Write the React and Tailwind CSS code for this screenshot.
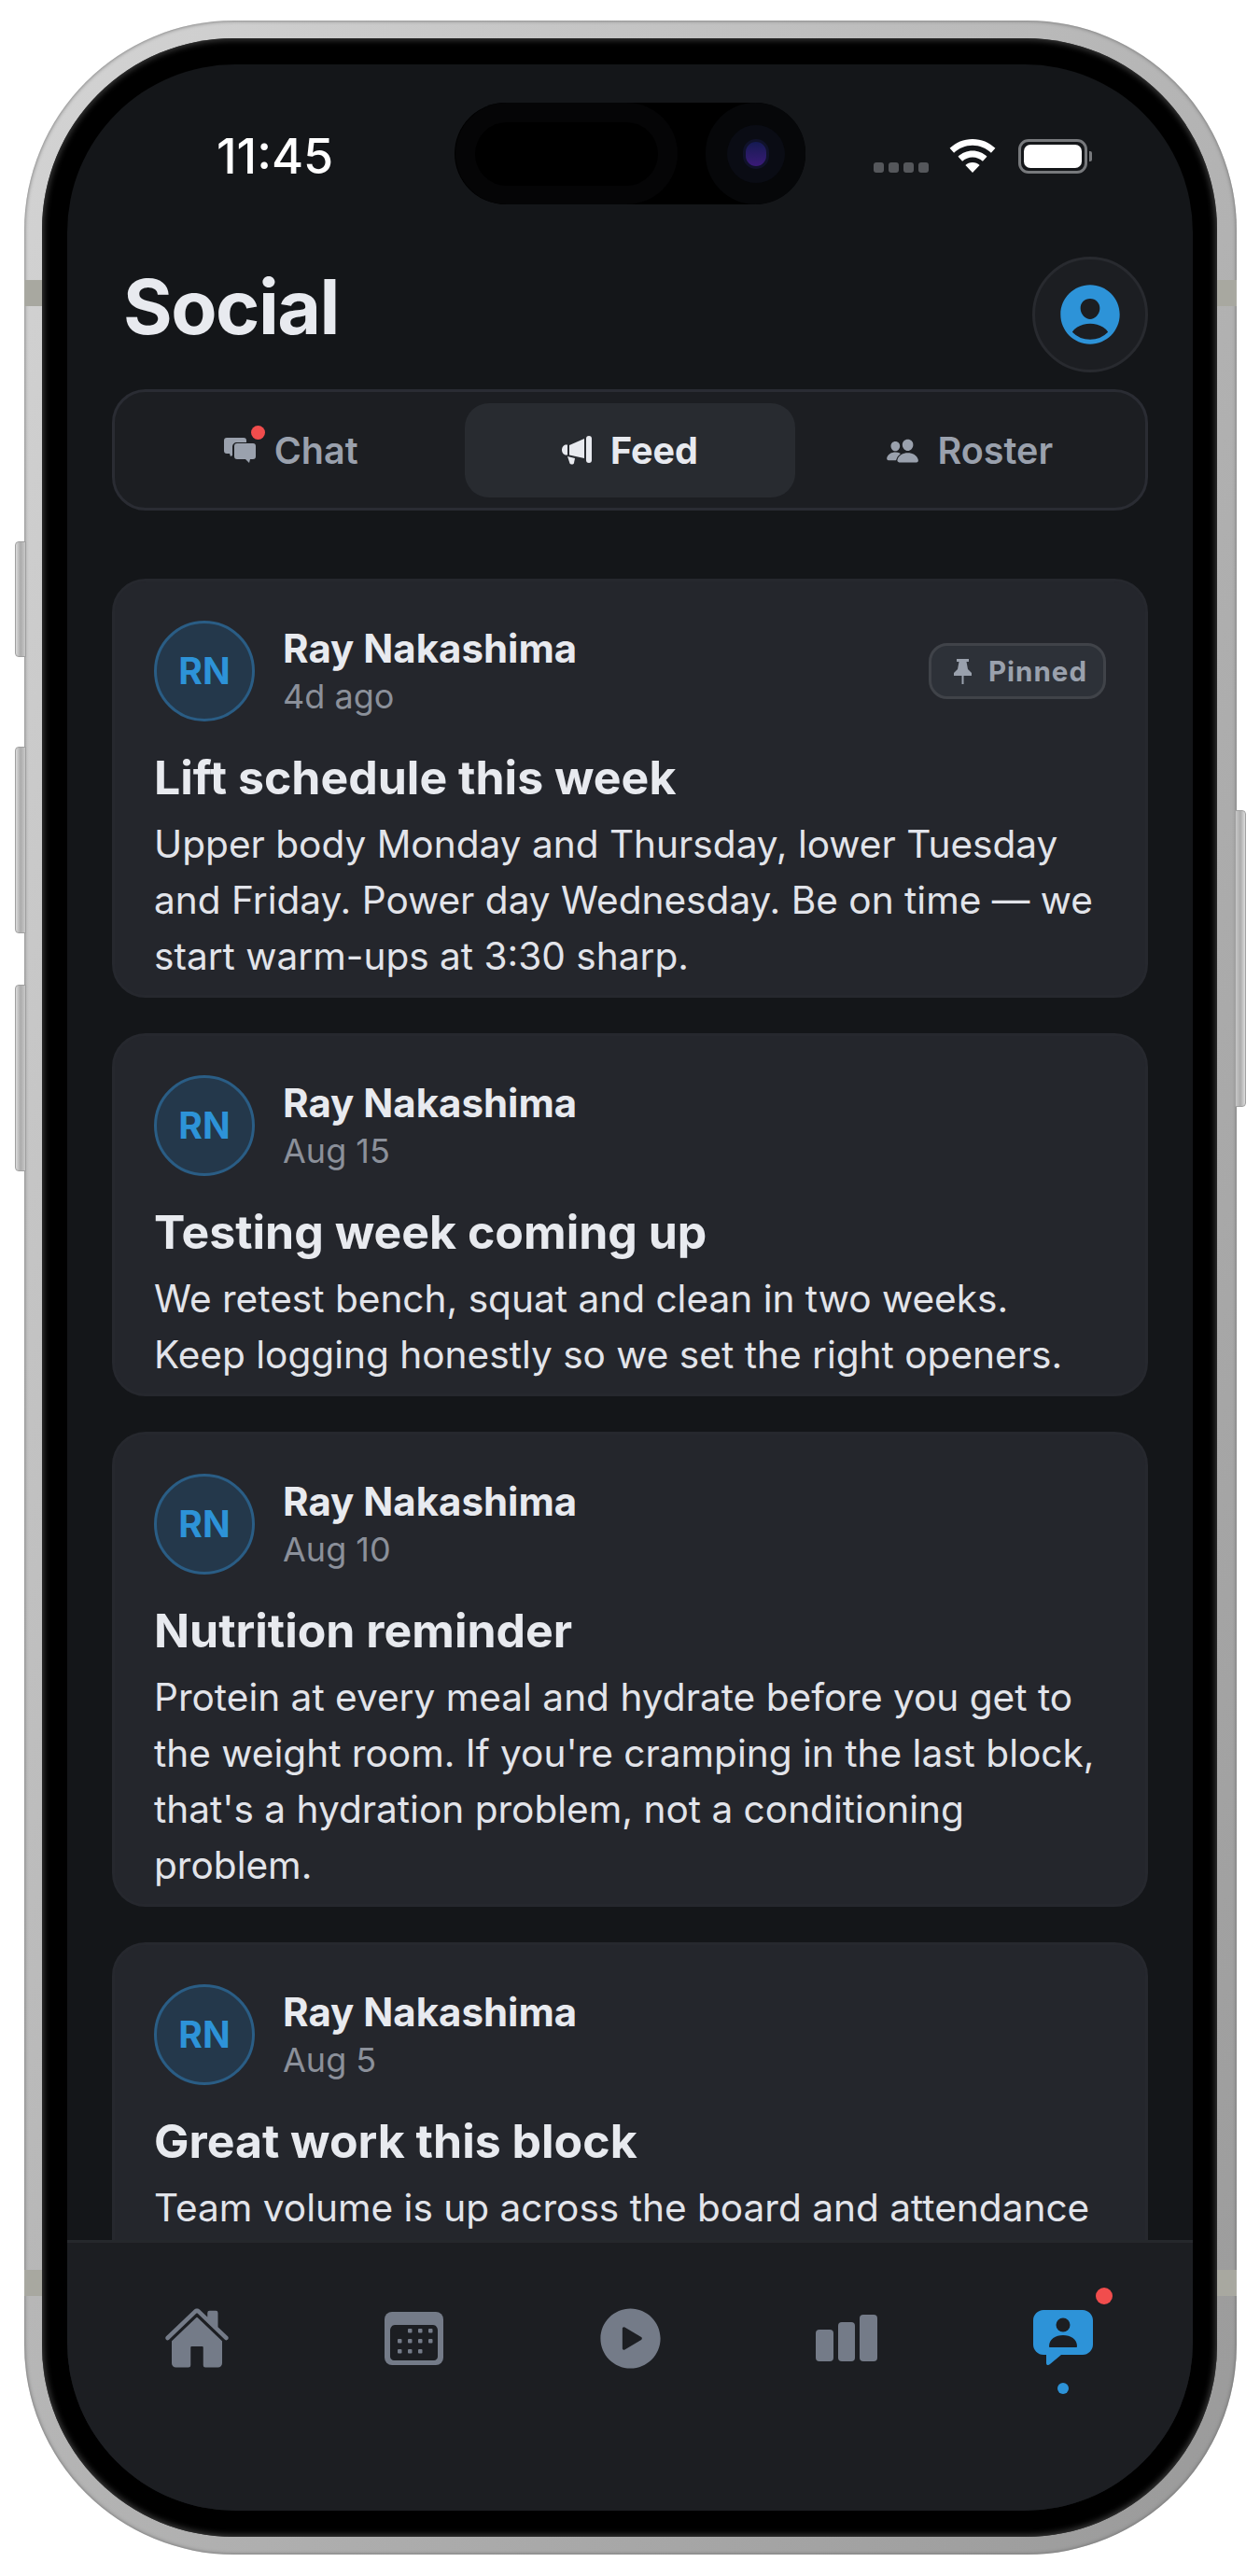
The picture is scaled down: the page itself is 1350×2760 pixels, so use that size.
import React from "react";
import { IoHome, IoPlayCircle, IoPeople, IoPersonCircle } from "react-icons/io5";

const posts = [
  {
    when: "4d ago",
    pinned: true,
    title: "Lift schedule this week",
    body: "Upper body Monday and Thursday, lower Tuesday and Friday. Power day Wednesday. Be on time — we start warm-ups at 3:30 sharp.",
  },
  {
    when: "Aug 15",
    title: "Testing week coming up",
    body: "We retest bench, squat and clean in two weeks. Keep logging honestly so we set the right openers.",
  },
  {
    when: "Aug 10",
    title: "Nutrition reminder",
    body: "Protein at every meal and hydrate before you get to the weight room. If you're cramping in the last block, that's a hydration problem, not a conditioning problem.",
  },
  {
    when: "Aug 5",
    title: "Great work this block",
    body: "Team volume is up across the board and attendance has been the best it's been all year.",
  },
];

function SideButton({ className }) {
  return (
    <div
      className={`absolute w-[12px] rounded-l-[4px] bg-gradient-to-r from-[#dcdcdc] via-[#ababab] to-[#c8c8c8] border border-[#a0a0a0] ${className}`}
    />
  );
}

function Wifi() {
  return (
    <svg width="50" height="36" viewBox="0 0 50 36" fill="#fff">
      <path d="M25 0C15.5 0 7 3.7 .6 9.8l4.500 5C10.300 9.800 17.300 6.800 25 6.800s14.700 3 19.900 8l4.500-5C43 3.700 34.500 0 25 0z" />
      <path d="M25 12.500c-6 0-11.500 2.400-15.500 6.200l4.600 5.100c2.800-2.700 6.700-4.400 10.900-4.400s8.100 1.700 10.900 4.400l4.600-5.100C36.500 14.900 31 12.500 25 12.500z" />
      <path d="M25 25c-3 0-5.700 1.200-7.600 3.100L25 36l7.600-7.900C30.700 26.200 28 25 25 25z" />
    </svg>
  );
}

function StatusBar() {
  return (
    <div className="h-[174px] shrink-0 flex items-start pl-[160px]">
      <span className="w-[255px] shrink-0 pt-[75px] text-[52px] leading-[48px] font-medium text-white">
        11:45
      </span>
      <div className="mt-[41px] w-[376px] h-[109px] shrink-0 rounded-[55px] bg-black flex items-center justify-between">
        <div className="ml-[1px] w-[238px] h-[109px] rounded-[55px] bg-[#050506] flex items-center justify-center">
          <div className="w-[196px] h-[68px] rounded-[34px] bg-black" />
        </div>
        <div className="w-[107px] h-[109px] rounded-full bg-[#060709] flex items-center justify-center">
          <div className="w-[62px] h-[62px] rounded-full bg-[#0a0c14] flex items-center justify-center">
            <div className="w-[28px] h-[32px] rounded-full bg-gradient-to-b from-[#141a52] to-[#3a1a78] border-[3px] border-[#10122a]" />
          </div>
        </div>
      </div>
      <div className="ml-[73px] mt-[80px] flex items-start shrink-0">
        <div className="mt-[25px] flex gap-[5px]">
          {[0, 1, 2, 3].map((i) => (
            <div key={i} className="w-[11px] h-[11px] rounded-[3px] bg-[#55575b]" />
          ))}
        </div>
        <div className="ml-[22px]">
          <Wifi />
        </div>
        <div className="ml-[24px] flex items-center">
          <div className="w-[74px] h-[37px] rounded-[11px] border-[3px] border-[#77797c] p-[3px]">
            <div className="w-full h-full rounded-[7px] bg-white" />
          </div>
          <div className="ml-[2px] w-[3px] h-[11px] rounded-r-[2px] bg-[#77797c]" />
        </div>
      </div>
    </div>
  );
}

function ChatIcon() {
  return (
    <svg width="34" height="27" viewBox="0 0 34 27" fill="currentColor">
      <path d="M3 0h18c2 0 3 1 3 3v2H14c-3 0-5 2-5 5v9l-2 1-1-3H3c-2 0-3-1-3-3V3c0-2 1-3 3-3z" />
      <path d="M14 6h17c2 0 3 1 3 3v11c0 2-1 3-3 3h-3l-1 4-4-4H14c-2 0-3-1-3-3V9c0-2 1-3 3-3z" />
    </svg>
  );
}

function MegaphoneIcon() {
  return (
    <svg width="32" height="31" viewBox="0 0 32 31" fill="currentColor">
      <rect x="26" y="0" width="6" height="29" rx="3" />
      <path d="M24 3v21L8 20.500V10z" />
      <path d="M6 9.500v11H4.500C2 20.500 0 18 0 15s2-5.500 4.500-5.500z" />
      <path d="M6 22l8 2-1 5c-.5 2-3.500 2-4.500.5z" />
    </svg>
  );
}

function PinIcon() {
  return (
    <svg width="19" height="27" viewBox="0 0 19 27" fill="currentColor">
      <path d="M3 0h13v3h-2.500L15 11l4 4v3h-8.500v9h-2v-9H0v-3l4-4 1.500-8H3z" />
    </svg>
  );
}

function CalendarIcon() {
  const dots = [
    [27, 15], [38, 15], [49, 15],
    [16, 26], [27, 26], [38, 26], [49, 26],
    [16, 37], [27, 37], [38, 37],
  ];
  return (
    <svg width="63" height="57" viewBox="0 0 63 57">
      <rect width="63" height="57" rx="8" fill="#747b88" />
      <path d="M6 20c0-3 2-6 5-6h41c3 0 5 3 5 6v28c0 2-2 4-4 4H10c-2 0-4-2-4-4z" fill="#1c1e22" />
      {dots.map(([x, y]) => (
        <rect key={`${x}-${y}`} x={x - 2} y={y + 3} width="4.500" height="4.500" rx="1" fill="#747b88" />
      ))}
    </svg>
  );
}

function BarsIcon() {
  return (
    <svg width="66" height="50" viewBox="0 0 66 50" fill="#747b88">
      <rect x="0" y="16" width="19" height="34" rx="4" />
      <rect x="24" y="8" width="18" height="42" rx="4" />
      <rect x="47" y="0" width="19" height="50" rx="4" />
    </svg>
  );
}

function ActiveNavIcon() {
  return (
    <svg width="64" height="60" viewBox="0 0 64 60">
      <path
        fill="#2d93d8"
        d="M11 0h42c6 0 11 5 11 11v26c0 6-5 11-11 11H30L18 58c-2 2-4 1-4-1v-9h-3C5 48 0 43 0 37V11C0 5 5 0 11 0z"
      />
      <circle cx="32" cy="16" r="7.500" fill="#1c1e22" />
      <path fill="#1c1e22" d="M17 39c0-8 7-12 15-12s15 4 15 12c0 .5-.5 1-1 1H18c-.5 0-1-.5-1-1z" />
    </svg>
  );
}

function Tab({ icon, label, active, dot }) {
  return (
    <div
      className={`flex-1 h-[101px] rounded-[26px] flex items-center justify-center gap-[20px] ${
        active ? "bg-[#282b30] text-[#e8eaef]" : "text-[#9aa1ad]"
      }`}
    >
      <span className="relative flex">
        {icon}
        {dot && (
          <span className="absolute -top-[13px] right-[-10px] w-[15px] h-[15px] rounded-full bg-[#f14d4d]" />
        )}
      </span>
      <span className={`text-[39.5px] leading-[48px] ${active ? "font-bold" : "font-semibold"}`}>
        {label}
      </span>
    </div>
  );
}

function PostCard({ post }) {
  return (
    <div className="shrink-0 rounded-[36px] bg-[#24262c] border-[3px] border-[#26282e] px-[42px] pt-[42px] pb-[11px]">
      <div className="flex items-center h-[108px]">
        <div className="w-[108px] h-[108px] rounded-full bg-[#24384b] border-[3px] border-[#2a5d85] flex items-center justify-center text-[39px] font-bold text-[#2d93d8]">
          RN
        </div>
        <div className="ml-[30px] flex-1">
          <div className="text-[42px] leading-[54px] font-bold text-[#e8eaef]">Ray Nakashima</div>
          <div className="text-[36px] leading-[48px] text-[#8b909a]">{post.when}</div>
        </div>
        {post.pinned && (
          <div className="flex items-center w-[190px] h-[60px] pl-[24px] rounded-[20px] bg-[#2d3138] border-[3px] border-[#404349] text-[#9aa1ad]">
            <PinIcon />
            <span className="ml-[18px] text-[29.5px] font-bold tracking-[1px]">Pinned</span>
          </div>
        )}
      </div>
      <h2 className="mt-[27px] text-[50px] leading-[66px] font-bold text-[#e8eaef]">{post.title}</h2>
      <p className="mt-[9px] text-[40.6px] leading-[60px] text-[#e2e4ea]">{post.body}</p>
    </div>
  );
}

function NavItem({ children, active }) {
  return (
    <div className="relative h-[78px] flex items-center justify-center text-[#747b88]">
      {children}
      {active && (
        <>
          <span className="absolute top-[-15px] left-1/2 ml-[35px] w-[18px] h-[18px] rounded-full bg-[#f14d4d]" />
          <span className="absolute bottom-[-21px] w-[12px] h-[12px] rounded-full bg-[#2d93d8]" />
        </>
      )}
    </div>
  );
}

export default function App() {
  return (
    <div className="w-[1350px] h-[2760px] bg-white pl-[26px] pt-[22px] font-['Inter',sans-serif]">
      <div className="relative w-[1299px] h-[2715px] rounded-[225px] bg-gradient-to-br from-[#d4d4d4] via-[#b4b4b4] to-[#9a9a9a] pl-[19px] pr-[21px] py-[19px] shadow-[inset_0_0_4px_#666]">
        <SideButton className="left-[-10px] top-[558px] h-[124px]" />
        <SideButton className="left-[-10px] top-[778px] h-[200px]" />
        <SideButton className="left-[-10px] top-[1033px] h-[200px]" />
        <SideButton className="right-[-10px] top-[846px] h-[318px] rotate-180" />
        <div className="absolute left-0 top-[278px] w-[19px] h-[28px] bg-[#a8a8a0]" />
        <div className="absolute right-0 top-[278px] w-[21px] h-[28px] bg-[#a8a8a0]" />
        <div className="absolute left-0 top-[2410px] w-[19px] h-[28px] bg-[#a8a8a0]" />
        <div className="absolute right-0 top-[2410px] w-[21px] h-[28px] bg-[#a8a8a0]" />
        <div className="w-full h-full rounded-[205px] bg-black pl-[27px] pr-[26px] pt-[28px] pb-[28px] shadow-[inset_0_0_6px_2px_#3a3a3a]">
          <div className="w-full h-full rounded-[180px] overflow-hidden bg-[#141619] flex flex-col">
            <StatusBar />
            <div className="h-[124px] shrink-0 mt-[32px] pl-[60px] pr-[48px] flex items-center justify-between">
              <h1 className="pb-[16px] text-[80.5px] leading-[100px] font-bold text-[#e8eaef] tracking-[-1.5px]">Social</h1>
              <div className="w-[124px] h-[124px] rounded-full bg-[#1c1e22] border-[3px] border-[#282a2f] flex items-center justify-center">
                <IoPersonCircle size={78} color="#2d93d8" />
              </div>
            </div>
            <div className="mx-[48px] mt-[18px] h-[130px] shrink-0 rounded-[36px] bg-[#1c1e22] border-[3px] border-[#2a2c33] p-[12px] flex gap-[10px]">
              <Tab label="Chat" dot icon={<ChatIcon />} />
              <Tab label="Feed" active icon={<MegaphoneIcon />} />
              <Tab label="Roster" icon={<IoPeople size={36} />} />
            </div>
            <div className="flex-1 min-h-0 overflow-hidden mx-[48px] pt-[73px] flex flex-col gap-[38px]">
              {posts.map((post) => (
                <PostCard key={post.title} post={post} />
              ))}
            </div>
            <div className="h-[290px] shrink-0 bg-[#1c1e22] border-t-[3px] border-[#25282c] px-[23px] pt-[63px] grid grid-cols-5 items-start">
              <NavItem><IoHome size={72} /></NavItem>
              <NavItem><CalendarIcon /></NavItem>
              <NavItem><IoPlayCircle size={79} /></NavItem>
              <NavItem><BarsIcon /></NavItem>
              <NavItem active><ActiveNavIcon /></NavItem>
            </div>
          </div>
        </div>
      </div>
    </div>
  );
}
